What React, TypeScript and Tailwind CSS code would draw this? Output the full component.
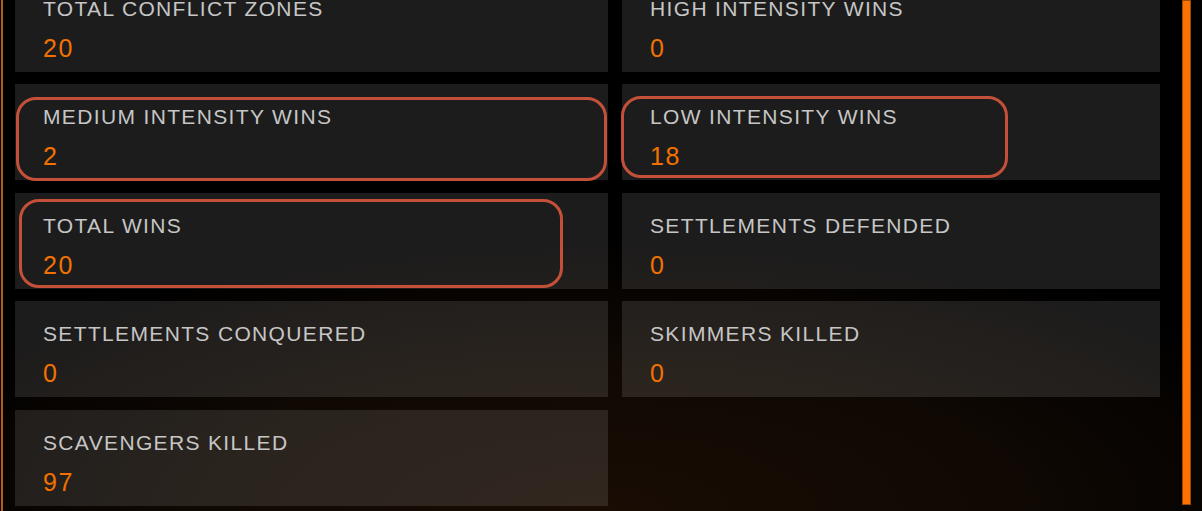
type Stat = {
  label: string;
  value: string;
  mark?: string;
};

const stats: Stat[] = [
  { label: "Total Conflict Zones", value: "20" },
  { label: "High Intensity Wins", value: "0" },
  { label: "Medium Intensity Wins", value: "2", mark: "left-[1px] top-[13px] w-[591px] h-[84px]" },
  { label: "Low Intensity Wins", value: "18", mark: "-left-[1px] top-[12px] w-[387px] h-[82px]" },
  { label: "Total Wins", value: "20", mark: "left-[4px] top-[6px] w-[544px] h-[89px]" },
  { label: "Settlements Defended", value: "0" },
  { label: "Settlements Conquered", value: "0" },
  { label: "Skimmers Killed", value: "0" },
  { label: "Scavengers Killed", value: "97" },
];

function StatCard({ stat }: { stat: Stat }) {
  return (
    <div className="relative h-[96px] bg-white/[0.11] pl-[28px] pt-[22px]">
      <div className="text-[21px] leading-[21px] tracking-[1.35px] uppercase text-[#c6c6c6]">
        {stat.label}
      </div>
      <div className="mt-[17px] text-[25px] leading-[25px] tracking-[1.5px] text-[#f27100]">
        {stat.value}
      </div>
      {stat.mark && (
        <div className={`absolute rounded-[20px] border-[3px] border-[#c4503a] ${stat.mark}`} />
      )}
    </div>
  );
}

export default function App() {
  return (
    <div
      className="relative h-[511px] w-full overflow-hidden bg-[radial-gradient(ellipse_65%_55%_at_50%_100%,#190d04_0%,#0f0803_55%,#000_100%)]"
      style={{ fontFamily: '"Liberation Sans", Arial, sans-serif' }}
    >
      <div className="flex h-full">
        <div className="ml-[1px] w-[2px] shrink-0 bg-[#b35d17]" />
        <div className="ml-[12px] -mt-[24.5px] grid grid-cols-[593px_538px] gap-x-[14px] gap-y-[12.5px] self-start">
          {stats.map((s) => (
            <StatCard key={s.label} stat={s} />
          ))}
        </div>
        <div className="ml-[22px] mb-[6px] w-[9px] shrink-0 border border-[#9a4a08] bg-[#ff7100]" />
      </div>
    </div>
  );
}
